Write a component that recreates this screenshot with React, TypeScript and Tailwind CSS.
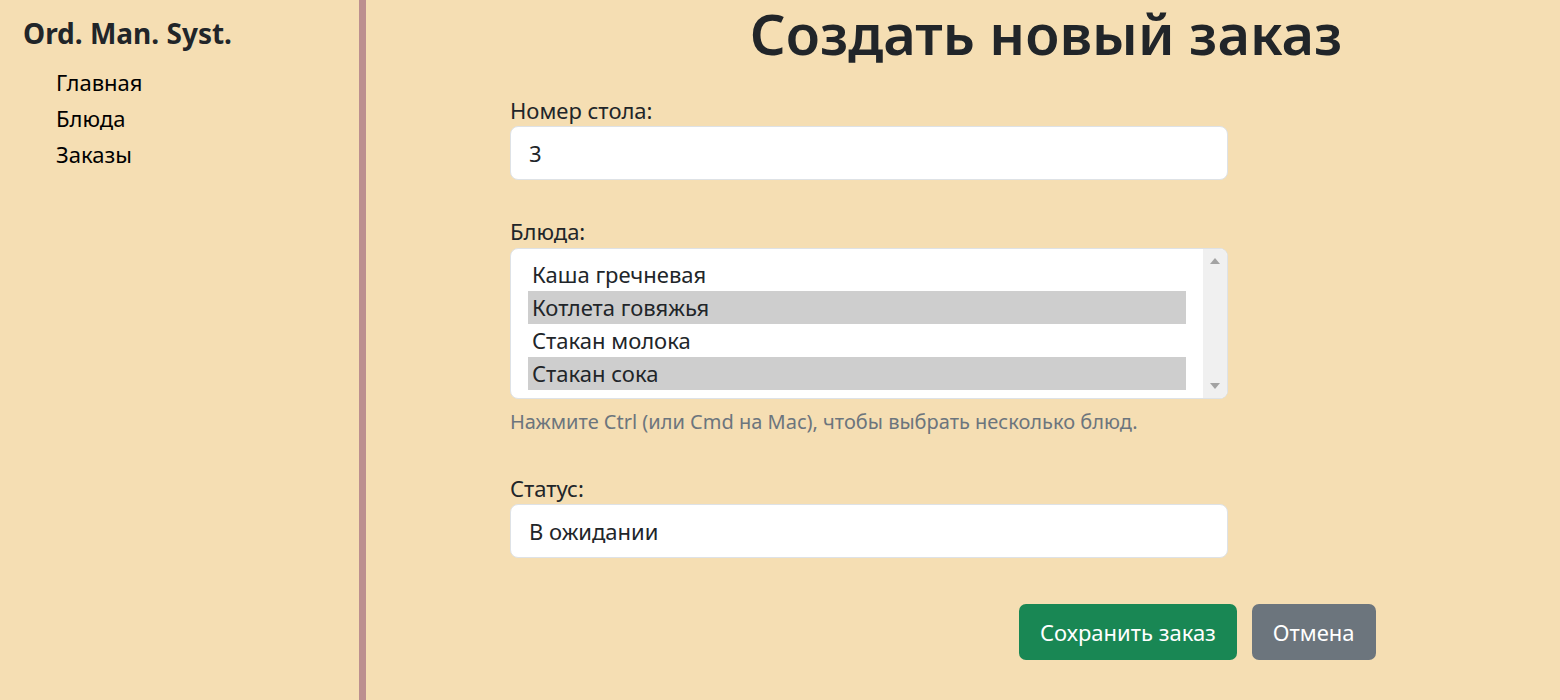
const dishes = [
  { name: "Каша гречневая", selected: false },
  { name: "Котлета говяжья", selected: true },
  { name: "Стакан молока", selected: false },
  { name: "Стакан сока", selected: true },
];

const navLinks = ["Главная", "Блюда", "Заказы"];

const Sidebar = () => {
  return (
    <aside className="w-[359px] shrink-0 pl-[23px] pt-[14px]">
      <h2 className="text-[28px] font-bold leading-[38px] text-[#212529]">
        Ord. Man. Syst.
      </h2>
      <nav className="flex flex-col pl-[33px] pt-[12px]">
        {navLinks.map((link) => (
          <a key={link} href="#" className="text-[22px] leading-[36px] text-black">
            {link}
          </a>
        ))}
      </nav>
    </aside>
  );
};

const DishList = () => {
  return (
    <div className="flex h-[151px] rounded-[8px] border border-[#dee2e6] bg-white overflow-hidden">
      <div className="flex-1 flex flex-col py-[9px] pl-[17px] pr-[17px]">
        {dishes.map((dish) => (
          <div
            key={dish.name}
            className={`h-[33px] pl-[4px] text-[22px] leading-[33px] text-[#212529] ${
              dish.selected ? "bg-[#cecece]" : ""
            }`}
          >
            {dish.name}
          </div>
        ))}
      </div>
      <div className="w-[24px] bg-[#f0f0f0] flex flex-col justify-between items-center py-[8px]">
        <svg width="12" height="8" viewBox="0 0 12 8">
          <polygon points="6,1 11,7 1,7" fill="#a3a3a3" />
        </svg>
        <svg width="12" height="8" viewBox="0 0 12 8">
          <polygon points="1,1 11,1 6,7" fill="#a3a3a3" />
        </svg>
      </div>
    </div>
  );
};

export default function App() {
  return (
    <div
      className="flex min-h-[700px] bg-[#f5deb3]"
      style={{ fontFamily: '"Noto Sans", "Open Sans", sans-serif' }}
    >
      <Sidebar />
      <div className="w-[7px] shrink-0 bg-[#bc8f8f]" />
      <main className="flex-1">
        <h1 className="pl-[166px] pt-[2px] text-center text-[56px] font-semibold leading-[62px] text-[#212529]">
          Создать новый заказ
        </h1>
        <form className="ml-[144px] w-[718px] pt-[31px]">
          <label className="block text-[22px] leading-[30px] text-[#212529]">
            Номер стола:
          </label>
          <div className="mt-[1px] flex h-[54px] items-center rounded-[8px] border border-[#dee2e6] bg-white px-[18px] text-[22px] text-[#212529]">
            3
          </div>

          <label className="mt-[36px] block text-[22px] leading-[30px] text-[#212529]">
            Блюда:
          </label>
          <div className="mt-[2px]">
            <DishList />
          </div>
          <p className="mt-[9px] text-[20px] leading-[28px] text-[#6c757d]">
            Нажмите Ctrl (или Cmd на Mac), чтобы выбрать несколько блюд.
          </p>

          <label className="mt-[37px] block text-[22px] leading-[30px] text-[#212529]">
            Статус:
          </label>
          <div className="mt-[1px] flex h-[54px] items-center rounded-[8px] border border-[#dee2e6] bg-white px-[18px] text-[22px] text-[#212529]">
            В ожидании
          </div>
        </form>
        <div className="mt-[46px] ml-[653px] flex gap-[15px]">
          <button className="h-[56px] rounded-[7px] bg-[#198754] px-[21px] text-[22px] text-white">
            Сохранить заказ
          </button>
          <button className="h-[56px] rounded-[7px] bg-[#6c757d] px-[21px] text-[22px] text-white">
            Отмена
          </button>
        </div>
      </main>
    </div>
  );
}
